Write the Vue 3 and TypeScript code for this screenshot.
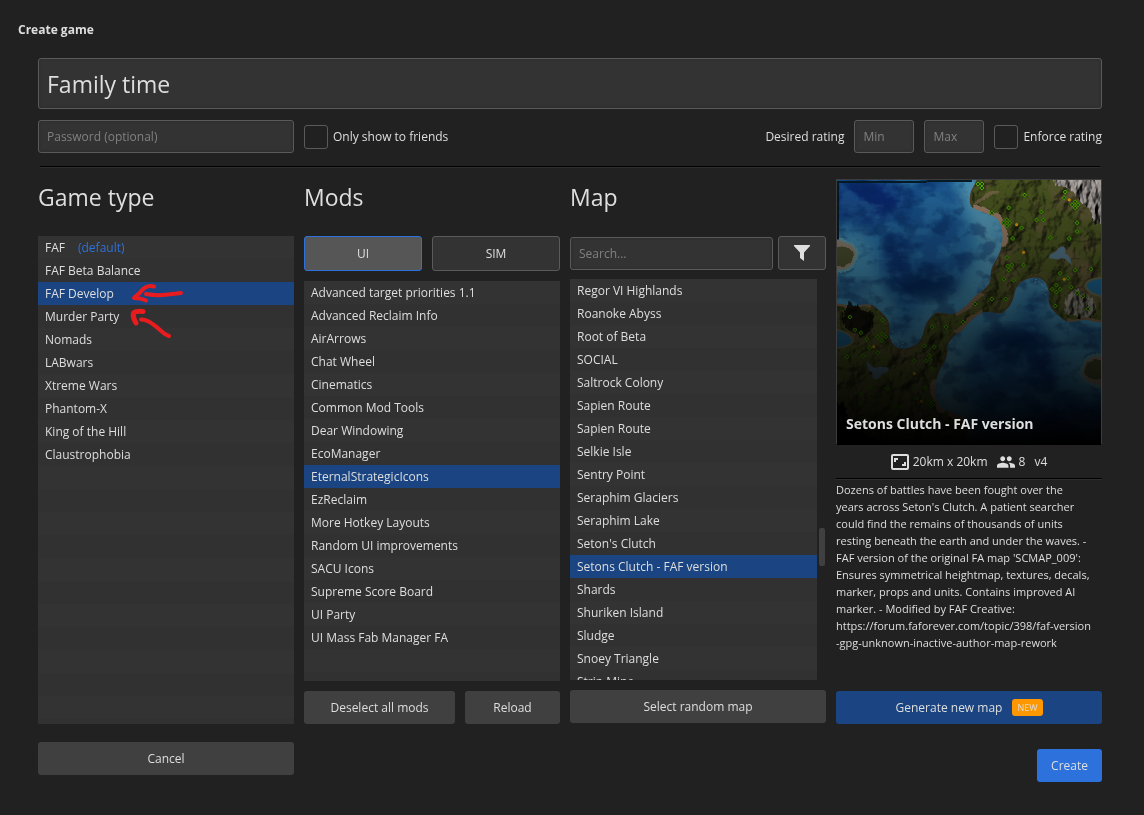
<script setup lang="ts">
import { ref } from 'vue'

const title = ref('Family time')
const password = ref('')
const search = ref('')
const minRating = ref('')
const maxRating = ref('')
const friendsOnly = ref(false)
const enforceRating = ref(false)
const modKind = ref('UI')

const gameTypes: string[] = [
  'FAF', 'FAF Beta Balance', 'FAF Develop', 'Murder Party', 'Nomads',
  'LABwars', 'Xtreme Wars', 'Phantom-X', 'King of the Hill', 'Claustrophobia',
]
const mods: string[] = [
  'Advanced target priorities 1.1', 'Advanced Reclaim Info', 'AirArrows', 'Chat Wheel',
  'Cinematics', 'Common Mod Tools', 'Dear Windowing', 'EcoManager', 'EternalStrategicIcons',
  'EzReclaim', 'More Hotkey Layouts', 'Random UI improvements', 'SACU Icons',
  'Supreme Score Board', 'UI Party', 'UI Mass Fab Manager FA',
]
const maps: string[] = [
  'Regor VI Highlands', 'Roanoke Abyss', 'Root of Beta', 'SOCIAL', 'Saltrock Colony',
  'Sapien Route', 'Sapien Route', 'Selkie Isle', 'Sentry Point', 'Seraphim Glaciers',
  'Seraphim Lake', "Seton's Clutch", 'Setons Clutch - FAF version', 'Shards',
  'Shuriken Island', 'Sludge', 'Snoey Triangle', 'Strip Mine',
]
const selectedType = ref(2)
const selectedMods = ref<number[]>([8])
const selectedMap = ref(12)

function toggleMod(i: number): void {
  selectedMods.value = selectedMods.value.includes(i)
    ? selectedMods.value.filter((m) => m !== i)
    : [...selectedMods.value, i]
}

const description = [
  'Dozens of battles have been fought over the',
  "years across Seton's Clutch. A patient searcher",
  'could find the remains of thousands of units',
  'resting beneath the earth and under the waves. -',
  "FAF version of the original FA map 'SCMAP_009':",
  'Ensures symmetrical heightmap, textures, decals,',
  'marker, props and units. Contains improved AI',
  'marker. - Modified by FAF Creative:',
  'https://forum.faforever.com/topic/398/faf-version',
  '-gpg-unknown-inactive-author-map-rework',
].join('\n')

// Resource deposits on one half of the map; the other half is its 180° rotation.
const mass: [number, number][] = [
  [142, 4], [146, 4], [146, 8], [189, 15], [230, 12], [229, 18], [156, 33], [173, 28], [240, 22], [237, 25],
  [243, 25], [240, 28], [171, 40], [168, 43], [174, 43], [171, 46], [186, 48], [206, 32], [201, 40],
  [208, 40], [242, 43], [242, 52], [215, 58], [234, 59], [177, 59], [171, 78], [172, 87], [176, 86],
  [173, 91], [188, 86], [168, 100], [178, 101], [225, 94], [240, 91], [233, 99], [256, 90],
  [236, 108], [221, 106], [217, 110], [225, 110], [221, 113], [242, 114], [248, 117], [253, 130], [220, 127],
  [170, 120], [156, 120], [139, 125],
]
const hydro: [number, number][] = [[234, 20], [181, 45], [188, 73], [229, 100]]
</script>

<template>
  <main class="page">
    <h1 class="window-title">Create game</h1>

    <div class="body">
      <input v-model="title" class="field title-field" type="text" aria-label="Game title" />

      <div class="options">
        <input v-model="password" class="field password" type="text" placeholder="Password (optional)" aria-label="Password" />
        <label class="check"><input v-model="friendsOnly" type="checkbox" /><span>Only show to friends</span></label>
        <div class="rating">
          <span>Desired rating</span>
          <input v-model="minRating" class="field small" type="text" placeholder="Min" aria-label="Minimum rating" />
          <input v-model="maxRating" class="field small" type="text" placeholder="Max" aria-label="Maximum rating" />
          <label class="check"><input v-model="enforceRating" type="checkbox" /><span>Enforce rating</span></label>
        </div>
      </div>

      <div class="rule top-rule"></div>

      <div class="columns">
        <section class="column">
          <h2>Game type</h2>
          <div class="list-wrap">
            <ul class="list">
              <li v-for="(g, i) in gameTypes" :key="i">
                <button class="row" :class="{ selected: i === selectedType }" @click="selectedType = i">
                  {{ g }}<span v-if="i === 0" class="default">(default)</span>
                </button>
              </li>
            </ul>
            <svg class="marks" width="60" height="64" viewBox="0 0 60 64" aria-hidden="true">
              <g fill="none" stroke="#e81c1f" stroke-linecap="round" stroke-linejoin="round">
                <path stroke-width="4" d="M24 6.500C18 5 14 7 10 12.500C8 15 5 16 4 18C7 18 13 19 16 20.500" />
                <path stroke-width="4" d="M16 14C24 15.500 31 15.500 38 14.500L51 13" />
                <path stroke-width="5" d="M6 43C3 38 3 34 4 32.500C6 31 9 31 13 31.500" />
                <path stroke-width="4" d="M11 39.500C17 39.500 20 42 24 45C30 49 33 54 39 56" />
              </g>
            </svg>
          </div>
        </section>

        <section class="column">
          <h2>Mods</h2>
          <div class="tabs">
            <button class="tab" :class="{ active: modKind === 'UI' }" @click="modKind = 'UI'">UI</button>
            <button class="tab" :class="{ active: modKind === 'SIM' }" @click="modKind = 'SIM'">SIM</button>
          </div>
          <ul class="list">
            <li v-for="(m, i) in mods" :key="i">
              <button class="row" :class="{ selected: selectedMods.includes(i) }" @click="toggleMod(i)">{{ m }}</button>
            </li>
          </ul>
          <div class="mod-actions">
            <button class="btn" @click="selectedMods = []">Deselect all mods</button>
            <button class="btn">Reload</button>
          </div>
        </section>

        <section class="column map-column">
          <h2>Map</h2>
          <div class="search-row">
            <input v-model="search" class="field search" type="text" placeholder="Search..." aria-label="Search maps" />
            <button class="tab filter" aria-label="Filter maps">
              <svg width="16" height="16" viewBox="0 0 16 16"><path fill="#dedede" d="M0 0H16V1L10 7.500V16L6 13V7.500L0 1Z" /></svg>
            </button>
          </div>
          <div class="scroll-area">
            <ul class="list">
              <li v-for="(m, i) in maps" :key="i">
                <button class="row" :class="{ selected: i === selectedMap }" @click="selectedMap = i">{{ m }}</button>
              </li>
            </ul>
            <div class="track"><div class="thumb"></div></div>
          </div>
          <button class="btn">Select random map</button>
        </section>

        <section class="column details">
          <div class="preview">
            <svg viewBox="0 0 266 266" preserveAspectRatio="xMidYMid slice" aria-hidden="true">
              <defs>
                <linearGradient id="shade" x1="0" y1="0" x2="0" y2="1">
                  <stop offset="0" stop-color="#000" stop-opacity="0" />
                  <stop offset="1" stop-color="#000" />
                </linearGradient>
                <filter id="soft" x="-20%" y="-20%" width="140%" height="140%" color-interpolation-filters="sRGB"><feGaussianBlur stdDeviation="7" /></filter>
                <filter id="edge" x="-10%" y="-10%" width="120%" height="120%" color-interpolation-filters="sRGB">
                  <feTurbulence type="fractalNoise" baseFrequency="0.09" numOctaves="3" seed="4" result="n" />
                  <feDisplacementMap in="SourceGraphic" in2="n" scale="5" xChannelSelector="R" yChannelSelector="G" />
                </filter>
                <filter id="relief" x="0" y="0" width="100%" height="100%" color-interpolation-filters="sRGB">
                  <feTurbulence type="fractalNoise" baseFrequency="0.05" numOctaves="4" seed="11" />
                  <feDiffuseLighting surfaceScale="8" diffuseConstant="1.200" lighting-color="#fff"><feDistantLight azimuth="210" elevation="50" /></feDiffuseLighting>
                </filter>
                <filter id="patches" x="0" y="0" width="100%" height="100%" color-interpolation-filters="sRGB">
                  <feTurbulence type="fractalNoise" baseFrequency="0.03" numOctaves="3" seed="7" />
                  <feColorMatrix values="0 0 0 0 .42  0 0 0 0 .34  0 0 0 0 .26  4 0 0 0 -1.900" />
                </filter>
                <filter id="waves" x="0" y="0" width="100%" height="100%" color-interpolation-filters="sRGB">
                  <feTurbulence type="fractalNoise" baseFrequency="0.035 0.05" numOctaves="5" seed="3" />
                  <feColorMatrix values="0 0 0 0 .22  0 0 0 0 .53  0 0 0 0 .7  5 0 0 0 -2.300" />
                </filter>
                <filter id="depths" x="0" y="0" width="100%" height="100%" color-interpolation-filters="sRGB">
                  <feTurbulence type="fractalNoise" baseFrequency="0.05 0.07" numOctaves="4" seed="22" />
                  <feColorMatrix values="0 0 0 0 .02  0 0 0 0 .14  0 0 0 0 .34  5 0 0 0 -2.500" />
                </filter>
                <filter id="rock" x="-10%" y="-10%" width="120%" height="120%" color-interpolation-filters="sRGB">
                  <feTurbulence type="fractalNoise" baseFrequency="0.16 0.07" numOctaves="3" seed="5" result="n" />
                  <feDiffuseLighting in="n" surfaceScale="5" diffuseConstant="1.100" lighting-color="#a39d99" result="l"><feDistantLight azimuth="215" elevation="48" /></feDiffuseLighting>
                  <feDisplacementMap in="SourceGraphic" in2="n" scale="12" xChannelSelector="R" yChannelSelector="G" result="s" />
                  <feComposite in="l" in2="s" operator="in" />
                </filter>
                <path id="sea-shape" d="M-10-10H142C144 0 134 8 134 16C133 22 134 27 138 29C146 33 153 34 160 38C166 43 168 56 166 65C165 73 161 79 157 86C154 92 155 99 154 103C150 110 144 113 139 117C134 124 126 131 120 134C113 137 105 132 99 134C93 139 90 143 88 150C86 159 84 164 77 167C69 171 62 171 57 166C53 161 52 154 53 147C52 138 45 134 39 128C32 123 25 126 17 127C10 127 5 123-10 125Z" />
                <clipPath id="sea-clip"><use href="#sea-shape" /></clipPath>
                <g id="half">
                  <g fill="none" filter="url(#edge)">
                    <use href="#sea-shape" stroke="#4b4129" stroke-width="3" />
                    <path d="M137 28C146 32 154 34 161 38C168 44 169 56 166 67" stroke="#947863" stroke-width="8" />
                    <path d="M146 113C138 122 128 131 119 135M0 124C12 127 22 124 34 125" stroke="#7b6449" stroke-width="5" />
                  </g>
                  <use href="#sea-shape" fill="#3f86a8" />
                  <g clip-path="url(#sea-clip)">
                    <path filter="url(#soft)" fill="#5897b2" d="M124-5H150V28L172 46L166 78L154 108L142 108C150 88 152 68 142 52C130 40 126 22 124-5Z" opacity="0.8" />
                    <path filter="url(#soft)" fill="#174f88" d="M-15-15H116C122 10 122 30 134 48C140 62 134 82 128 94C120 108 102 117 90 120C80 128 77 140 70 156C62 158 63 142 62 128C54 112 42 102 40 80L36 62L24 50L-15 52Z" />
                    <path filter="url(#soft)" fill="#103767" d="M-15 102C0 108 18 104 32 100V110C18 114 0 116-15 116Z" />
                    <ellipse filter="url(#soft)" cx="26" cy="20" rx="44" ry="22" fill="#09276a" />
                    <ellipse filter="url(#soft)" cx="88" cy="104" rx="34" ry="15" fill="#082d5d" />
                    <ellipse filter="url(#soft)" cx="62" cy="78" rx="14" ry="26" fill="#0b316b" />
                    <rect width="170" height="175" filter="url(#waves)" opacity="0.35" />
                    <rect width="170" height="175" filter="url(#depths)" opacity="0.4" />
                    <path d="M54 158l4 3-3 4M59 162l4 4 5-2M61 170l6-3M55 152l3 3" stroke="#68a8c4" stroke-dasharray="2 2" fill="none" />
                  </g>
                  <ellipse cx="1" cy="76" rx="20" ry="18" fill="#5a8e9a" filter="url(#edge)" />
                  <ellipse cx="1" cy="76" rx="17" ry="15" fill="#85796a" filter="url(#edge)" />
                  <ellipse cx="4" cy="77" rx="12" ry="10" fill="#474b2d" filter="url(#edge)" />
                  <path d="M222-5H275V58C262 55 263 38 254 30C248 26 247 18 239 12C232 7 225 9 216-2Z" fill="#aaa" filter="url(#rock)" />
                  <path d="M231 115C240 108 252 114 259 124C266 134 259 141 252 142C240 143 232 135 228 128Z" fill="#777" filter="url(#rock)" opacity="0.75" />
                  <path d="M214 79C213 72 220 75 222 70C227 64 232 68 230 74C237 77 235 83 237 86C231 82 229 76 224 80Z" fill="#527184" />
                  <path d="M270 99C258 98 248 103 251 108C254 114 260 116 270 118Z" fill="#1d648e" stroke="#63664b" stroke-width="2" />
                  <path d="M140 25C147 14 154 12 162 13" stroke="#7e6950" stroke-width="4" opacity="0.7" fill="none" filter="url(#edge)" />
                </g>
                <g id="deposits">
                  <g v-for="(p, i) in mass" :key="i">
                    <rect :x="p[0] - 2" :y="p[1] - 2" width="4" height="4" rx="1" fill="#173906" />
                    <path :d="`M${p[0] - 2} ${p[1]}h1m2 0h1M${p[0]} ${p[1] - 2}v1m0 2v1`" stroke="#5fb005" stroke-width="2" />
                  </g>
                  <g v-for="(p, i) in hydro" :key="'h' + i">
                    <circle :cx="p[0]" :cy="p[1]" r="1.600" fill="#d99409" />
                  </g>
                </g>
              </defs>
              <rect width="266" height="266" fill="#47521f" />
              <rect width="266" height="266" filter="url(#patches)" opacity="0.65" />
              <rect width="266" height="266" filter="url(#relief)" class="relief" opacity="0.7" />
              <use href="#half" />
              <use href="#half" transform="rotate(180 133 134)" />
              <path d="M1 60V2H90" stroke="#061a26" stroke-width="2" fill="none" />
              <path d="M90 1H136" stroke="#061a26" stroke-width="2" fill="none" />
              <use href="#deposits" />
              <use href="#deposits" transform="rotate(180 133 134)" />
              <rect width="266" height="266" fill="url(#shade)" />
            </svg>
            <h3>Setons Clutch - FAF version</h3>
          </div>
          <div class="facts">
            <svg width="18" height="16" viewBox="0 0 18 16" fill="none" stroke="#dedede" stroke-width="2" aria-hidden="true">
              <rect x="1" y="1" width="16" height="14" rx="1" />
              <path d="M4 8V5H7M11 11H14V8" />
            </svg>
            <span class="size">20km x 20km</span>
            <svg width="18" height="12" viewBox="1 5 22 14" fill="#dedede" aria-hidden="true">
              <path d="M16 11c1.660 0 2.990-1.340 2.990-3S17.660 5 16 5c-1.660 0-3 1.340-3 3s1.340 3 3 3zm-8 0c1.660 0 2.990-1.340 2.990-3S9.660 5 8 5C6.340 5 5 6.340 5 8s1.340 3 3 3zm0 2c-2.330 0-7 1.170-7 3.500V19h14v-2.500c0-2.330-4.670-3.500-7-3.500zm8 0c-.29 0-.62.020-.97.050 1.160.84 1.970 1.970 1.970 3.450V19h6v-2.500c0-2.330-4.670-3.500-7-3.500z" />
            </svg>
            <span class="players">8</span>
            <span>v4</span>
          </div>
          <div class="rule"></div>
          <p class="description">{{ description }}</p>
          <button class="btn generate">Generate new map<span class="badge">NEW</span></button>
        </section>
      </div>

      <footer class="footer">
        <button class="btn cancel">Cancel</button>
        <button class="btn create">Create</button>
      </footer>
    </div>
  </main>
</template>

<style>
body {
  margin: 0;
  background: #212121;
}
</style>

<style scoped>
* {
  box-sizing: border-box;
}
.page {
  min-height: 100vh;
  display: flex;
  flex-direction: column;
  background: #212121;
  color: #dedede;
  font-family: "Open Sans", "Noto Sans", sans-serif;
  font-size: 12px;
  line-height: 17px;
}
button,
input {
  font: inherit;
  color: inherit;
  margin: 0;
}
.window-title {
  margin: 0;
  padding: 21px 18px 20px;
  font-size: 12px;
  line-height: 17px;
  font-weight: 700;
}
.body {
  flex: 1;
  display: flex;
  flex-direction: column;
  padding: 0 42px 33px 38px;
}
.field {
  height: 33px;
  min-width: 0;
  padding: 0 8px;
  background: #333;
  border: 1px solid #5a5a5a;
  border-radius: 3px;
  box-shadow: inset 0 0 3px #292929;
  outline: none;
}
.field::placeholder {
  color: #808080;
  opacity: 1;
}
.title-field {
  width: 100%;
  height: 51px;
  font-size: 23px;
}
.options {
  display: flex;
  align-items: center;
  gap: 10px;
  margin-top: 11px;
}
.password {
  width: 256px;
}
.small {
  width: 60px;
}
.check {
  display: flex;
  align-items: center;
  gap: 5px;
}
.check input {
  appearance: none;
  width: 24px;
  height: 24px;
  background: #212121;
  border: 1px solid #5a5a5a;
  border-radius: 3px;
}
.check input:checked {
  background: #2d71dc;
}
.rating {
  display: flex;
  align-items: center;
  gap: 10px;
  margin-left: auto;
}
.rule {
  height: 2px;
  border-top: 1px solid #000;
  background: #2e2e2e;
}
.top-rule {
  margin: 13px 2px 11px;
}
.columns {
  flex: 1;
  display: grid;
  grid-template-columns: 256fr 256fr 256fr 266fr;
  gap: 10px;
}
.column {
  min-width: 0;
  display: flex;
  flex-direction: column;
}
h2 {
  margin: 0 0 21px;
  font-size: 23px;
  line-height: 36px;
  font-weight: 400;
}
.list-wrap {
  position: relative;
  flex: 1;
  display: flex;
}
.list {
  flex: 1 1 0;
  min-height: 230px;
  margin: 0;
  padding: 0;
  list-style: none;
  overflow: hidden;
  background: repeating-linear-gradient(#333 0 23px, #313131 23px 46px);
}
.row {
  display: block;
  width: 100%;
  height: 23px;
  padding: 0 7px;
  border: 0;
  background: transparent;
  text-align: left;
  white-space: nowrap;
}
.row.selected {
  background: #1a4582;
}
.default {
  margin-left: 13px;
  color: #2d71dc;
}
.marks {
  position: absolute;
  left: 92px;
  top: 44px;
  pointer-events: none;
}
.tabs {
  display: grid;
  grid-template-columns: 118fr 128fr;
  gap: 10px;
  margin-bottom: 10px;
}
.tab {
  height: 35px;
  background: #333;
  border: 1px solid #5a5a5a;
  border-radius: 3px;
}
.tab.active {
  background: #565656;
  border-color: #2d71dc;
}
.btn {
  height: 33px;
  padding: 0 14px;
  border: 0;
  border-radius: 3px;
  background: #404040;
  white-space: nowrap;
}
.mod-actions {
  display: grid;
  grid-template-columns: 151fr 95fr;
  gap: 10px;
  margin-top: 10px;
}
.map-column {
  padding-bottom: 1px;
}
.search-row {
  display: flex;
  align-items: flex-end;
  gap: 5px;
  margin-bottom: 9px;
}
.search {
  flex: 1;
}
.filter {
  width: 48px;
  height: 34px;
  padding: 0;
  display: flex;
  align-items: center;
  justify-content: center;
}
.scroll-area {
  flex: 1 1 0;
  min-height: 230px;
  display: flex;
  gap: 2px;
  overflow: hidden;
  margin-bottom: 10px;
}
.track {
  width: 7px;
  padding: 249px 1px 0 0;
}
.thumb {
  height: 38px;
  border-radius: 2px;
  background: #404040;
}
.preview {
  position: relative;
  aspect-ratio: 1;
  overflow: hidden;
  border: 1px solid #3c3c3c;
  border-bottom-color: #000;
}
.preview svg {
  display: block;
  width: 100%;
  height: 100%;
}
.relief {
  mix-blend-mode: multiply;
}
.preview h3 {
  position: absolute;
  left: 9px;
  bottom: 10px;
  margin: 0;
  font-size: 14px;
  line-height: 20px;
  font-weight: 700;
}
.facts {
  display: flex;
  align-items: center;
  justify-content: center;
  gap: 4px;
  height: 33px;
}
.size,
.players {
  margin-right: 5px;
}
.description {
  flex: 1;
  margin: 1px 0 10px;
  font-size: 11px;
  white-space: pre;
}
.generate {
  display: flex;
  align-items: center;
  justify-content: center;
  gap: 10px;
  background: #1a4582;
}
.badge {
  padding: 0 5px;
  border-radius: 3px;
  background: #ff9800;
  font-size: 9px;
  line-height: 17px;
}
.footer {
  display: flex;
  justify-content: space-between;
  height: 40px;
  margin-top: 18px;
}
.cancel {
  width: 256px;
}
.create {
  align-self: flex-end;
  background: #2d71dc;
}
</style>
